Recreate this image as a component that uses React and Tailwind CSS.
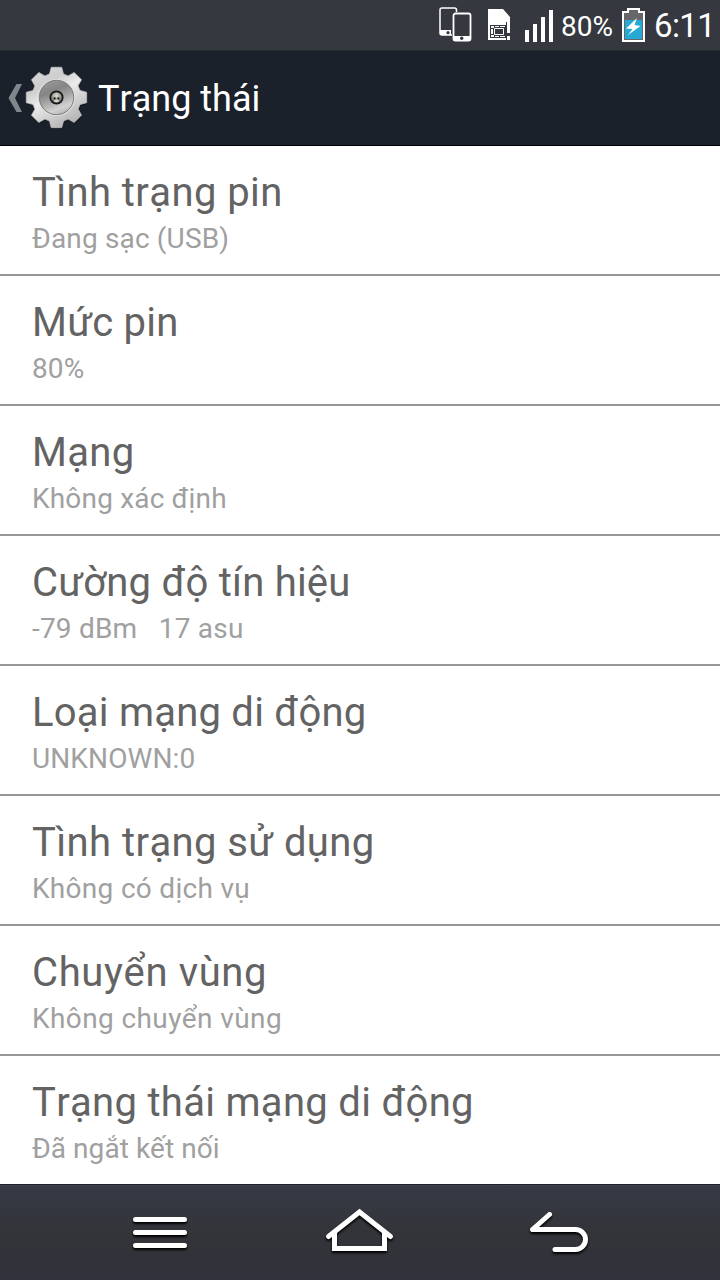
const rows = [
  { title: "Tình trạng pin", titleClass: "tracking-[0.41px]", value: "Đang sạc (USB)", valueClass: "tracking-[0.16px]" },
  { title: "Mức pin", titleClass: "tracking-[0.25px]", value: "80%", valueClass: "tracking-[0.1px]" },
  { title: "Mạng", titleClass: "tracking-[0.3px]", value: "Không xác định", valueClass: "tracking-[0.18px]" },
  { title: "Cường độ tín hiệu", titleClass: "tracking-[0.22px]", value: "-79 dBm   17 asu", valueClass: "tracking-[0.2px]" },
  { title: "Loại mạng di động", titleClass: "tracking-[0.23px]", value: "UNKNOWN:0", valueClass: "tracking-[0.12px]" },
  { title: "Tình trạng sử dụng", titleClass: "tracking-[0.42px]", value: "Không có dịch vụ", valueClass: "tracking-[0.3px]" },
  { title: "Chuyển vùng", titleClass: "tracking-[0.63px]", value: "Không chuyển vùng", valueClass: "tracking-[0.4px]" },
  { title: "Trạng thái mạng di động", titleClass: "tracking-[0.3px]", value: "Đã ngắt kết nối", valueClass: "tracking-[0.05px]" },
];

function DevicesIcon() {
  return (
    <svg className="h-9 w-[34px]" viewBox="0 0 34 36" fill="none">
      <path d="M17.500 5V3a2 2 0 0 0-2-2H3a2 2 0 0 0-2 2v23a2 2 0 0 0 2 2h10" stroke="#fff" strokeWidth="1.5" />
      <path d="M1 23h11v5H3a2 2 0 0 1-2-2z" fill="#fff" />
      <circle cx="9" cy="25.7" r="1.6" fill="#35373f" />
      <rect x="14.5" y="6.5" width="17" height="27" rx="2" stroke="#fff" strokeWidth="1.8" />
      <path d="M14 29h18v4.500h-18z" fill="#fff" />
      <circle cx="22.700" cy="31.300" r="1.700" fill="#35373f" />
    </svg>
  );
}

function SimIcon() {
  return (
    <svg className="h-8 w-[23px]" viewBox="0 0 23 32">
      <path d="M0 0h15l7 8v23H0z" fill="#fff" />
      <path d="M2 16h16v13H2zM18 13h1v18h-1zM19 24h3v3h-3z" fill="#35373f" />
      <path d="M3 17h3v2H3zM7 17h4v1H7zM12 17h5v1h-5zM3 20h2v5H3zM3 26h3v2H3zM7 27h4v1H7zM12 27h5v1h-5z" fill="#fff" />
      <path d="M6.500 19.500h9v6h-9z" fill="none" stroke="#fff" strokeWidth="1" />
    </svg>
  );
}

function SignalIcon() {
  return (
    <svg className="h-8 w-7" viewBox="0 0 28 32">
      <path d="M0 20h4v12H0zM8 14h4v18H8zM16 7h4v25h-4zM24 0h4v32h-4z" fill="#fff" />
    </svg>
  );
}

function BatteryIcon() {
  return (
    <svg className="h-[34px] w-[23px]" viewBox="0 0 23 34">
      <path d="M5 0h13v3h5v31H0V3h5z" fill="#fff" />
      <path d="M7 2h9v3h5v27H2V5h5z" fill="#67676a" />
      <path d="M3 12h17v19H3z" fill="#27a9d6" />
      <path d="M15 10 4 20.500l6.500.500L6 27 18.500 18l-6-1z" fill="#fff" />
    </svg>
  );
}

function gearPath() {
  const pts = [];
  const profile = [
    [-5.2, -30.2],
    [5.2, -30.2],
    [7, -23.500],
    [11.600, -21.600],
  ];
  for (let i = 0; i < 8; i++) {
    const a = (i * Math.PI) / 4;
    for (const [x, y] of profile) {
      pts.push(
        `${(x * Math.cos(a) - y * Math.sin(a)).toFixed(2)} ${(x * Math.sin(a) + y * Math.cos(a)).toFixed(2)}`
      );
    }
  }
  return `M${pts.join("L")}Z`;
}

function GearIcon() {
  return (
    <svg className="h-[66px] w-[66px]" viewBox="-33.5 -33.5 66 66">
      <defs>
        <linearGradient id="gearBody" x1="0.1" y1="0" x2="0.7" y2="1">
          <stop offset="0" stopColor="#dadada" />
          <stop offset="0.3" stopColor="#cecece" />
          <stop offset="0.5" stopColor="#ebebeb" />
          <stop offset="0.75" stopColor="#cdcdcd" />
          <stop offset="1" stopColor="#b0b0b0" />
        </linearGradient>
        <linearGradient id="gearDish" x1="0.3" y1="0" x2="0.7" y2="1">
          <stop offset="0" stopColor="#989898" />
          <stop offset="0.3" stopColor="#858585" />
          <stop offset="0.55" stopColor="#a8a8a8" />
          <stop offset="0.8" stopColor="#d2d2d2" />
          <stop offset="1" stopColor="#b2b2b2" />
        </linearGradient>
        <radialGradient id="gearHub" cx="0.5" cy="0.35" r="0.6">
          <stop offset="0" stopColor="#dcdcd6" />
          <stop offset="0.6" stopColor="#96968f" />
          <stop offset="1" stopColor="#555" />
        </radialGradient>
      </defs>
      <path d={gearPath()} transform="translate(0.600 1.200)" fill="#090c10" opacity="0.7" />
      <path d={gearPath()} fill="url(#gearBody)" stroke="#bcbcbc" strokeWidth="0.8" strokeLinejoin="round" />
      <circle r="18.600" fill="#e2e2e2" />
      <circle r="17.200" fill="url(#gearDish)" stroke="#7c7c7c" strokeWidth="1" />
      <circle r="6.200" fill="url(#gearHub)" stroke="#161616" strokeWidth="1.700" />
      <circle cx="-1.900" cy="0.800" r="1.100" fill="#1c1c1c" />
      <circle cx="1.900" cy="0.800" r="1.100" fill="#1c1c1c" />
      <ellipse cx="0" cy="3.600" rx="2.600" ry="1.200" fill="#d8d8d0" />
    </svg>
  );
}

export default function App() {
  return (
    <div className="flex h-[1280px] w-[720px] flex-col overflow-hidden bg-white font-['Roboto','Noto_Sans',sans-serif] [font-kerning:none]">
      <header className="flex h-[51px] shrink-0 items-start border-b border-[#252b33] bg-[#36383f] pl-[439px] text-white">
        <div className="pt-[7px]"><DevicesIcon /></div>
        <div className="ml-[15px] pt-[9px]"><SimIcon /></div>
        <div className="ml-[14px] pt-[10px]"><SignalIcon /></div>
        <span className="ml-2 mt-[10px] w-[53px] whitespace-nowrap text-[28px] leading-[34px]">80%</span>
        <div className="ml-2 pt-2"><BatteryIcon /></div>
        <span className="ml-[9px] mt-[6px] whitespace-nowrap text-[33px] leading-[40px] tracking-[-0.6px]">6:11</span>
      </header>
      <div className="flex h-[95px] shrink-0 items-start border-b border-black bg-[#1b212b] pl-2 text-white">
        <svg className="mt-[33px] h-7 w-[14px]" viewBox="0 0 14 28">
          <path d="M8.500 0H14L7 14l7 14H8.500L0.500 14z" fill="#81858c" />
        </svg>
        <div className="ml-[1px] mt-[13px]"><GearIcon /></div>
        <h1 className="ml-[9px] mt-[27px] whitespace-nowrap text-[36px] leading-[42px]">Trạng thái</h1>
      </div>
      <main className="flex h-[1038px] shrink-0 flex-col overflow-hidden">
        {rows.map((r) => (
          <div key={r.title} className="flex h-[130px] shrink-0 flex-col border-b-2 border-[#969696] pl-8 pt-[23px]">
            <div className={`h-12 whitespace-pre text-[40px] leading-[48px] text-[#636363] ${r.titleClass}`}>{r.title}</div>
            <div className={`mt-[5px] whitespace-pre text-[28px] leading-[34px] text-[#a0a0a0] ${r.valueClass}`}>{r.value}</div>
          </div>
        ))}
      </main>
      <nav className="flex h-24 shrink-0 border-t border-[#1d2029] bg-linear-to-b from-[#363a46] via-[#323438] via-50% to-[#31323b]">
        <div className="flex w-full items-start border-t border-[#41454f] pl-[133px] pt-[21px]">
          <svg className="h-12 w-[56px] drop-shadow-[0_2px_1px_#000]" viewBox="133 1207 56 48" fill="none" stroke="#fff" strokeWidth="5">
            <path d="M135.500 1219.500h49M135.500 1232.500h49M135.500 1245.500h49" strokeLinecap="round" />
          </svg>
          <svg className="ml-[135px] h-12 w-[72px] drop-shadow-[0_2px_1px_#000]" viewBox="324 1207 72 48" fill="none" stroke="#fff" strokeWidth="5">
            <path d="M328.500 1236.500l31-24.500l31 24.500" strokeLinecap="round" />
            <path d="M334.500 1232v16.500h50V1232" />
          </svg>
          <svg className="ml-[132px] h-12 w-[64px] drop-shadow-[0_2px_1px_#000]" viewBox="528 1207 64 48" fill="none" stroke="#fff" strokeWidth="5">
            <path d="M549.500 1214.500l-17 15H575.500a10 10 0 0 1 0 20h-20.500" strokeLinecap="round" strokeLinejoin="round" />
          </svg>
        </div>
      </nav>
    </div>
  );
}
